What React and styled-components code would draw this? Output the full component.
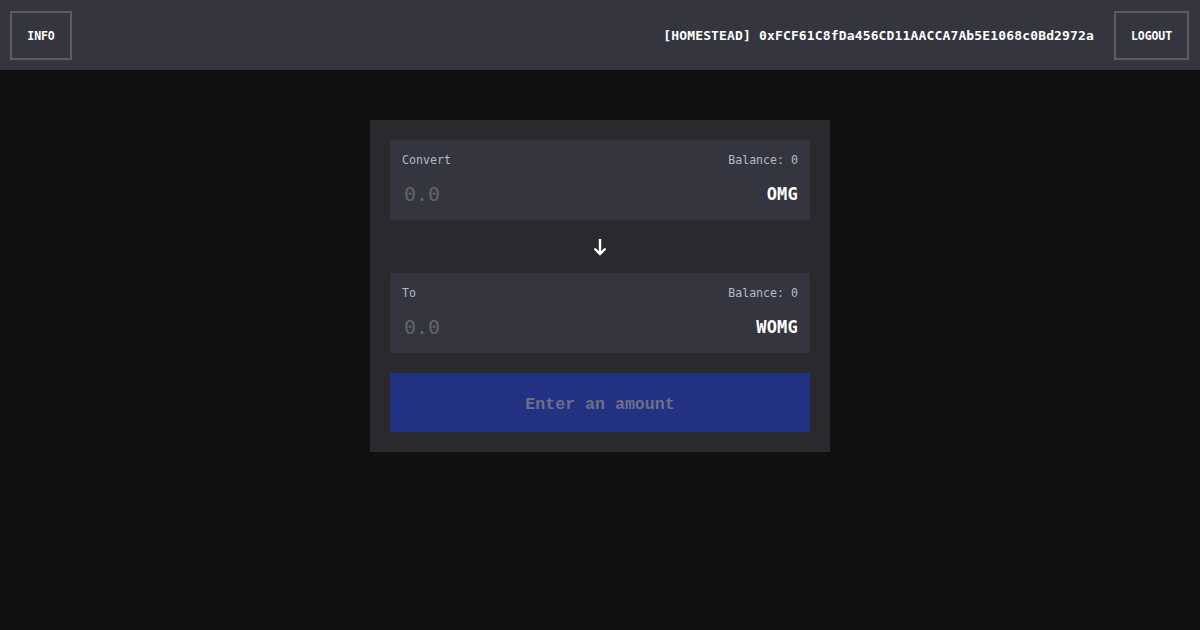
import React from "react";
import styled, { createGlobalStyle } from "styled-components";

const Global = createGlobalStyle`
  html, body { margin: 0; padding: 0; background: #111111; }
  body { font-family: "DejaVu Sans Mono", monospace; color: #fff; }
  * { box-sizing: border-box; }
`;

const Page = styled.div`
  min-height: 630px;
  background: #111111;
  display: flex;
  flex-direction: column;
`;

const Header = styled.header`
  height: 70px;
  background: #35353f;
  display: flex;
  align-items: center;
  padding: 0 11px 0 10px;
  gap: 20px;
`;

const HeaderButton = styled.button`
  height: 49px;
  width: ${(p) => p.$w}px;
  margin-top: 1px;
  background: transparent;
  border: 2px solid #5b5b67;
  color: #fff;
  font-family: "DejaVu Sans Mono", monospace;
  font-weight: bold;
  font-size: 11.5px;
  letter-spacing: -0.1px;
  padding: 0;
`;

const Spacer = styled.div`
  flex: 1;
`;

const Address = styled.span`
  font-family: "DejaVu Sans Mono", monospace;
  font-weight: bold;
  font-size: 13px;
  color: #fff;
  letter-spacing: 0.15px;
  margin-top: 1px;
`;

const Main = styled.main`
  display: flex;
  justify-content: center;
  padding-top: 50px;
`;

const Card = styled.div`
  width: 460px;
  background: #29292e;
  padding: 20px;
  display: flex;
  flex-direction: column;
`;

const Panel = styled.div`
  height: 80px;
  background: #35353f;
  padding: 12px 12px 0 12px;
  display: flex;
  flex-direction: column;
`;

const Row = styled.div`
  display: flex;
  justify-content: space-between;
  align-items: center;
`;

const Label = styled.span`
  font-size: 11.6px;
  color: #b3bacb;
  line-height: 16px;
`;

const AmountRow = styled(Row)`
  margin-top: 13px;
`;

const Placeholder = styled.span`
  font-size: 20px;
  color: #62646c;
  padding-left: 2px;
  line-height: 26px;
`;

const Token = styled.span`
  font-size: 17px;
  font-weight: bold;
  color: #fff;
  letter-spacing: 0.2px;
  line-height: 26px;
`;

const ArrowWrap = styled.div`
  height: 53px;
  display: flex;
  align-items: center;
  justify-content: center;
`;

const SubmitButton = styled.button`
  margin-top: 20px;
  height: 59px;
  background: #233182;
  border: none;
  color: #6c7088;
  font-family: "Liberation Mono", monospace;
  font-weight: bold;
  font-size: 16.6px;
  padding: 4px 0 0 0;
`;

function TokenPanel({ label, token }) {
  return (
    <Panel>
      <Row>
        <Label>{label}</Label>
        <Label>Balance: 0</Label>
      </Row>
      <AmountRow>
        <Placeholder>0.0</Placeholder>
        <Token>{token}</Token>
      </AmountRow>
    </Panel>
  );
}

export default function App() {
  return (
    <Page>
      <Global />
      <Header>
        <HeaderButton $w={62}>INFO</HeaderButton>
        <Spacer />
        <Address>[HOMESTEAD] 0xFCF61C8fDa456CD11AACCA7Ab5E1068c0Bd2972a</Address>
        <HeaderButton $w={75}>LOGOUT</HeaderButton>
      </Header>
      <Main>
        <Card>
          <TokenPanel label="Convert" token="OMG" />
          <ArrowWrap>
            <svg width="14" height="18" viewBox="0 0 14 18" fill="none">
              <path d="M7 1v15M1.5 10.5L7 16l5.5-5.5" stroke="#fff" strokeWidth="2.4" />
            </svg>
          </ArrowWrap>
          <TokenPanel label="To" token="WOMG" />
          <SubmitButton>Enter an amount</SubmitButton>
        </Card>
      </Main>
    </Page>
  );
}
